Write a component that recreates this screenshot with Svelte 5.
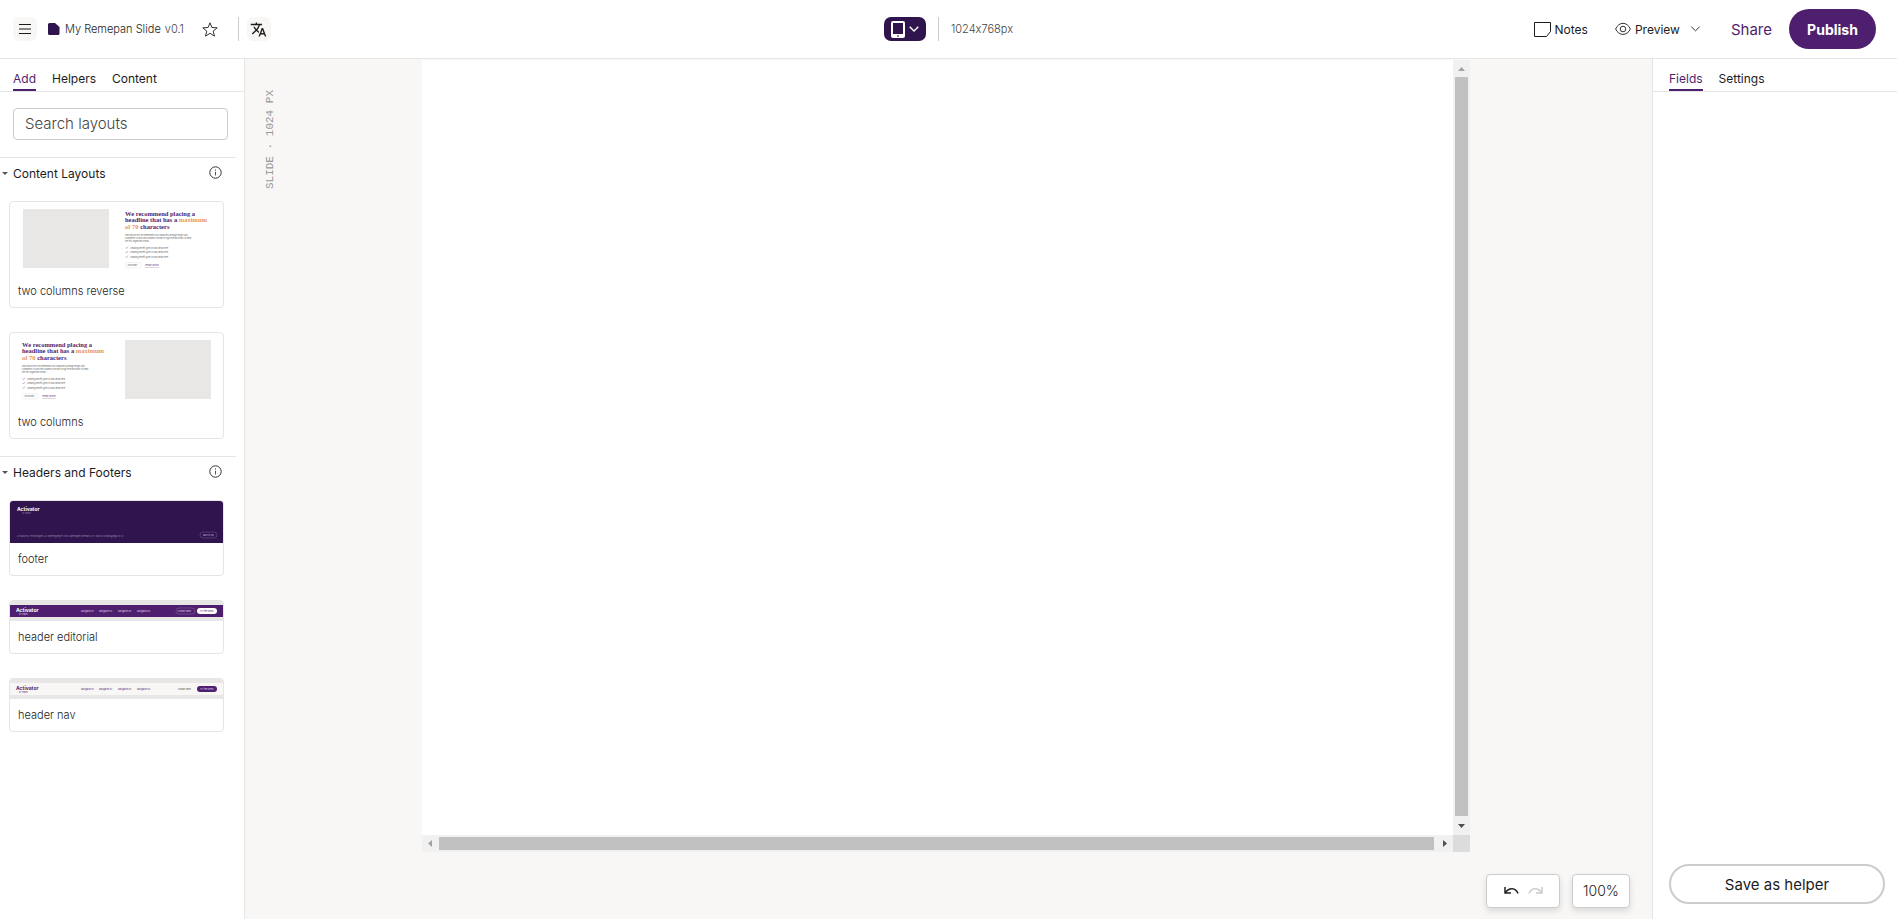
<script>
	const leftTabs = ['Add', 'Helpers', 'Content'];
	const rightTabs = ['Fields', 'Settings'];
	const groups = [
		{
			title: 'Content Layouts',
			items: [
				{ label: 'two columns reverse', kind: 'columns', textX: 230, boxX: 26 },
				{ label: 'two columns', kind: 'columns', textX: 24, boxX: 230 }
			]
		},
		{
			title: 'Headers and Footers',
			items: [
				{ label: 'footer', kind: 'footer' },
				{ label: 'header editorial', kind: 'header', dark: true },
				{ label: 'header nav', kind: 'header', dark: false }
			]
		}
	];
	const navX = [71, 89, 108, 127];

	let leftTab = 'Add';
	let rightTab = 'Fields';
	let search = '';
</script>

<div class="app">
	<header>
		<div class="bar-left">
			<button class="square" aria-label="Menu">
				<svg width="12" height="10" viewBox="0 0 12 10"><path d="M0 .5h12M0 5h12M0 9.5h12" stroke="#1c1c1c" stroke-width="1.2" /></svg>
			</button>
			<svg class="doc" width="12" height="12" viewBox="0 0 12 12"><path d="M1.500 0H7l4.500 4v6.500A1.500 1.500 0 0 1 10 12H1.500A1.500 1.500 0 0 1 0 10.500v-9A1.500 1.500 0 0 1 1.500 0z" fill="#2f144d" /></svg>
			<span class="name">My Remepan Slide</span>
			<span class="version">v0.1</span>
			<button class="plain star" aria-label="Favourite">
				<svg width="16" height="15" viewBox="0 0 16 15"><path d="M8 .8l1.900 4.700 5.300.3-4 3.300 1.300 5L8 11.300l-4.500 2.800 1.300-5-4-3.300 5.300-.3z" fill="none" stroke="#333" stroke-linejoin="round" /></svg>
			</button>
			<span class="divider"></span>
			<button class="square" aria-label="Translate">
				<svg width="17" height="17" viewBox="0 0 24 24"><path d="M12.870 15.070l-2.540-2.510.03-.03A17.520 17.520 0 0 0 14.070 6H17V4h-7V2H8v2H1v2h11.170A15.700 15.700 0 0 1 9 11.350 15.700 15.700 0 0 1 6.690 8h-2a17.600 17.600 0 0 0 2.980 4.560l-5.090 5.020L4 19l5-5 3.110 3.110zM18.500 10h-2L12 22h2l1.120-3h4.750L21 22h2zm-2.620 7l1.620-4.330L19.120 17z" fill="#1c1c1c" /></svg>
			</button>
		</div>
		<div class="bar-middle">
			<button class="device" aria-label="Device size">
				<svg width="14" height="17" viewBox="0 0 14 17"><rect width="14" height="17" rx="2" fill="#fff" /><rect x="2" y="2" width="10" height="11" fill="#2f144d" /><path d="M6 15h2" stroke="#2f144d" /></svg>
				<svg width="10" height="6" viewBox="0 0 10 6"><path d="M.7.7L5 5 9.300.7" fill="none" stroke="#fff" stroke-width="1.400" /></svg>
			</button>
			<span class="divider"></span>
			<span class="size">1024x768px</span>
		</div>
		<div class="bar-right">
			<button class="plain notes">
				<svg width="17" height="15" viewBox="0 0 17 15"><path d="M.5.5h16v9l-4 5H.5z" fill="none" stroke="#1c1c1c" stroke-linejoin="round" /></svg>
				Notes
			</button>
			<button class="plain preview">
				<svg width="16" height="14" viewBox="0 0 16 14"><path d="M.6 7C4-.6 12-.6 15.400 7 12 14.200 4 14.200.6 7z" fill="none" stroke="#333" /><circle cx="8" cy="7" r="2.800" fill="none" stroke="#333" /></svg>
				Preview
				<svg class="caret" width="9" height="6" viewBox="0 0 9 6"><path d="M.4.8l4.100 4 4.100-4" fill="none" stroke="#333" /></svg>
			</button>
			<button class="plain share">Share</button>
			<button class="publish">Publish</button>
		</div>
	</header>

	<main>
		<aside class="left">
			<nav>
				{#each leftTabs as tab}
					<button class:active={leftTab === tab} on:click={() => (leftTab = tab)}>{tab}</button>
				{/each}
			</nav>
			<div class="search">
				<input type="text" placeholder="Search layouts" aria-label="Search layouts" bind:value={search} />
			</div>
			{#each groups as group}
				<details open>
					<summary>
						<span class="arrow"></span>
						{group.title}
						<svg class="info" width="13" height="13" viewBox="0 0 13 13"><circle cx="6.500" cy="6.500" r="5.700" fill="none" stroke="#333" /><path d="M6.500 5.700v3.800M6.500 3.400v1.200" stroke="#555" /></svg>
					</summary>
					<div class="cards">
						{#each group.items as item}
							<button class="card">
								{#if item.kind === 'columns'}
									<svg viewBox="0 0 426 146">
										<rect x={item.boxX} y="14" width="172" height="118" fill="#e8e7e6" />
										<g transform="translate({item.textX} 0)">
											<g class="headline">
												<text y="27">We recommend placing a</text>
												<text y="40">headline that has a <tspan class="orange">maximum</tspan></text>
												<text y="53"><tspan class="orange">of 70</tspan> characters</text>
											</g>
											<g class="copy">
												<text y="68">Description text recommended 150 characters average length split.</text>
												<text y="74">Completely to provide a shared concept in high level and easy to keep</text>
												<text y="80">the text organised overall.</text>
											</g>
											{#each [93, 102, 111] as y}
												<path d="M1 {y - 2}l2 2 3-4" fill="none" stroke="#8a6ba8" />
												<text class="small" x="10" {y}>Amazing benefit goes in bold detail here</text>
											{/each}
											<rect x="0" y="121" width="32" height="11" rx="4" fill="#fff" stroke="#e5e5e5" />
											<text class="small" x="5" y="128">Secondary</text>
											<text class="small link" x="40" y="128">Tertiary action</text>
										</g>
									</svg>
								{:else if item.kind === 'footer'}
									<svg viewBox="0 0 213 42">
										<rect width="213" height="42" fill="#2f144d" />
										<text class="logo white" x="7" y="10">Activator</text>
										<text class="faint" x="12" y="13">by Zeplin</text>
										<text class="faint" x="7" y="36">Activator Buy Technologies LLC  Weteringweg 91 2018 Copenhagen Denmark  20 11 1000 00  contact@legal.co.uk</text>
										<rect x="190" y="31" width="17" height="6" rx="3" fill="none" stroke="#785f91" stroke-width=".5" />
										<text class="tiny pale" x="193" y="35">Back to top</text>
									</svg>
								{:else}
									<svg viewBox="0 0 213 20" class:dark={item.dark}>
										<rect width="213" height="20" fill="#e8e7e6" />
										<rect class="strip" y="4" width="213" height="12" />
										<text class="logo" x="6" y="11">Activator</text>
										<text class="tiny nav-text" x="9" y="14">by Zeplin</text>
										{#each navX as x, i}
											<text class="tiny nav-text" {x} y="11">Navigation 0{i + 1}</text>
										{/each}
										<rect class="ghost" x="166" y="7" width="19" height="6" rx="3" />
										<text class="tiny contact" x="168" y="11">Contact sales</text>
										<rect class="solid" x="187" y="7" width="20" height="6" rx="3" />
										<text class="tiny solid-text" x="190" y="11">Try free demo</text>
									</svg>
								{/if}
								<span>{item.label}</span>
							</button>
						{/each}
					</div>
				</details>
			{/each}
		</aside>

		<section class="stage">
			<div class="workspace">
				<span class="ruler">SLIDE · 1024 PX</span>
				<div class="frame">
					<div class="slide"></div>
					<div class="track vertical">
						<svg viewBox="0 0 17 17"><path d="M5 11h7L8.500 7z" fill="#a3a3a3" /></svg>
						<div class="thumb"></div>
						<svg viewBox="0 0 17 17"><path d="M5 6h7l-3.500 4z" fill="#505050" /></svg>
					</div>
					<div class="track horizontal">
						<svg viewBox="0 0 17 17"><path d="M10 5v7L6 8.500z" fill="#a3a3a3" /></svg>
						<div class="thumb"></div>
						<svg viewBox="0 0 17 17"><path d="M7 5v7l4-3.500z" fill="#505050" /></svg>
					</div>
					<div class="corner"></div>
				</div>
			</div>
			<div class="tools">
				<div class="history">
					<button class="plain" aria-label="Undo">
						<svg width="15" height="8" viewBox="0 0 15 8"><path d="M1 0v6h6M1.500 5.500C5 .2 11.500.2 14 6.500" fill="none" stroke="#222" stroke-width="1.500" /></svg>
					</button>
					<button class="plain" aria-label="Redo" disabled>
						<svg width="15" height="8" viewBox="0 0 15 8"><path d="M14 0v6H8M13.500 5.500C10 .2 3.500.2 1 6.500" fill="none" stroke="#ccc" stroke-width="1.500" /></svg>
					</button>
				</div>
				<button class="zoom">100%</button>
			</div>
		</section>

		<aside class="right">
			<nav>
				{#each rightTabs as tab}
					<button class:active={rightTab === tab} on:click={() => (rightTab = tab)}>{tab}</button>
				{/each}
			</nav>
			<button class="save">Save as helper</button>
		</aside>
	</main>
</div>

<style>
	:global(body) {
		margin: 0;
	}
	.app {
		display: flex;
		flex-direction: column;
		min-height: 100vh;
		font-family: Inter, 'DM Sans', sans-serif;
		font-size: 12px;
		font-variant-ligatures: no-contextual;
		color: #1c1c1c;
		background: #fff;
	}
	.app * {
		box-sizing: border-box;
	}
	button {
		font: inherit;
		font-variant-ligatures: no-contextual;
		color: inherit;
		padding: 0;
		border: 0;
		background: none;
		cursor: pointer;
	}
	svg {
		display: block;
		flex: none;
	}
	header {
		display: grid;
		grid-template-columns: 1fr auto 1fr;
		align-items: center;
		height: 59px;
		padding: 0 21px 0 13px;
		border-bottom: 1px solid #e5e5e5;
	}
	.bar-left,
	.bar-middle,
	.bar-right {
		display: flex;
		align-items: center;
		height: 48px;
	}
	.bar-middle {
		margin-left: 8px;
	}
	.bar-right {
		justify-content: flex-end;
	}
	.square {
		display: grid;
		place-items: center;
		width: 24px;
		height: 24px;
		border-radius: 6px;
		background: #f8f7f5;
	}
	.doc {
		margin: 0 5px 0 11px;
	}
	.name {
		font-size: 11px;
		font-weight: 300;
		color: #1c1c1c;
	}
	.version {
		margin-left: 4px;
		font-size: 11px;
		font-weight: 300;
		color: #444;
	}
	.star {
		margin: 0 20px 0 18px;
	}
	.divider {
		width: 1px;
		height: 24px;
		background: #ccc;
	}
	.bar-left .divider {
		margin-right: 8px;
	}
	.device {
		display: flex;
		align-items: center;
		justify-content: center;
		gap: 4px;
		width: 42px;
		height: 24px;
		border-radius: 7px;
		background: #2f144d;
	}
	.bar-middle .divider {
		margin: 0 12px;
	}
	.size {
		font-size: 11px;
		font-weight: 300;
		color: #444;
	}
	.notes,
	.preview {
		display: flex;
		align-items: center;
		gap: 4px;
	}
	.notes {
		margin-right: 27px;
	}
	.caret {
		margin-left: 7px;
	}
	.share {
		margin: 0 17px 0 31px;
		font-size: 15px;
		color: #4f1f6f;
	}
	.publish {
		width: 87px;
		height: 40px;
		border-radius: 20px;
		font-size: 14px;
		font-weight: 700;
		color: #fff;
		background: #4f1f6f;
	}
	main {
		display: flex;
		flex: 1;
	}
	.left {
		width: 245px;
		border-right: 1px solid #e5e5e5;
	}
	.right {
		display: flex;
		flex-direction: column;
		width: 245px;
		border-left: 1px solid #e5e5e5;
	}
	nav {
		display: flex;
		align-items: flex-end;
		gap: 16px;
		height: 33px;
		padding: 0 13px;
		border-bottom: 1px solid #e5e5e5;
	}
	.right nav {
		padding: 0 16px;
	}
	nav button {
		height: 24px;
		border-bottom: 2px solid transparent;
	}
	nav button.active {
		color: #4f1f6f;
		border-color: #4f1f6f;
	}
	.search {
		padding: 16px 16px 17px 13px;
	}
	.search input {
		display: block;
		width: 100%;
		height: 32px;
		padding: 0 11px 1px;
		font: inherit;
		font-size: 15px;
		font-weight: 300;
		border: 1px solid #ccc;
		border-radius: 4px;
	}
	.search input::placeholder {
		color: #444;
	}
	details {
		width: 236px;
		border-top: 1px solid #e5e5e5;
		padding-bottom: 17px;
	}
	summary {
		display: flex;
		align-items: center;
		height: 43px;
		padding: 0 14px 12px 2px;
		list-style: none;
		cursor: pointer;
	}
	.arrow {
		margin-right: 5px;
		border: 3px solid transparent;
		border-top-color: #555;
		border-bottom: 0;
		width: 5px;
	}
	.info {
		margin: 0 0 3px auto;
	}
	.cards {
		display: flex;
		flex-direction: column;
		gap: 24px;
		padding: 0 12px 0 9px;
	}
	.card {
		width: 100%;
		overflow: hidden;
		text-align: left;
		border: 1px solid #e5e5e5;
		border-radius: 4px;
	}
	.card svg {
		width: 100%;
	}
	.card span {
		display: block;
		padding: 0 8px;
		font-size: 11px;
		font-weight: 300;
		line-height: 32px;
		color: #1c1c1c;
	}
	.headline {
		font: bold 13px 'Liberation Serif', serif;
		fill: #4f1f6f;
	}
	.orange {
		fill: #e8955a;
	}
	.copy,
	.small {
		font-size: 4px;
		fill: #666;
	}
	.tiny {
		font-size: 2px;
		fill: #444;
	}
	.link {
		fill: #4f1f6f;
		text-decoration: underline;
	}
	.logo {
		font-size: 5px;
		font-weight: 700;
		fill: #4f1f6f;
	}
	.white,
	.dark .logo {
		fill: #fff;
	}
	.faint {
		font-size: 2px;
		fill: #9c8aad;
	}
	.pale {
		fill: #c9bed4;
	}
	.strip {
		fill: #f8f7f5;
	}
	.dark .strip {
		fill: #4f1f6f;
	}
	.nav-text {
		fill: #4f1f6f;
	}
	.dark .nav-text,
	.dark .contact {
		fill: #e0d5e8;
	}
	.ghost {
		fill: none;
	}
	.dark .ghost {
		stroke: #8c6aa5;
		stroke-width: 0.5px;
	}
	.solid {
		fill: #4f1f6f;
	}
	.solid-text {
		fill: #e0d5e8;
	}
	.dark .solid {
		fill: #fff;
	}
	.dark .solid-text {
		fill: #4f1f6f;
	}
	.stage {
		display: flex;
		flex: 1;
		flex-direction: column;
		background: #f8f7f5;
	}
	.workspace {
		display: grid;
		flex: 1;
		grid-template-columns: 177px 1fr 182px;
		padding-top: 1px;
	}
	.ruler {
		justify-self: start;
		align-self: start;
		margin: 30px 0 0 17px;
		font: 11px/16px 'Liberation Mono', monospace;
		color: #999;
		writing-mode: vertical-rl;
		transform: rotate(180deg);
	}
	.frame {
		display: grid;
		grid-template: 1fr 17px / 1fr 17px;
	}
	.slide {
		background: #fff;
	}
	.track {
		display: flex;
		background: #f1f1f1;
	}
	.vertical {
		flex-direction: column;
	}
	.track svg {
		width: 17px;
		height: 17px;
	}
	.thumb {
		flex: 1;
		background: #c1c1c1;
	}
	.vertical .thumb {
		margin: 0 2px 2px;
	}
	.horizontal .thumb {
		margin: 2px 2px 2px 0;
	}
	.corner {
		background: #dcdcdc;
	}
	.tools {
		display: flex;
		justify-content: flex-end;
		gap: 12px;
		padding: 22px 22px 11px;
	}
	.history,
	.zoom {
		display: flex;
		align-items: center;
		justify-content: center;
		height: 34px;
		border: 1px solid #ccc;
		border-radius: 4px;
		background: #fff;
		box-shadow: 0 3px 6px rgba(0, 0, 0, 0.12);
	}
	.history {
		gap: 9px;
		width: 74px;
	}
	.zoom {
		width: 58px;
		padding-bottom: 1px;
		font-size: 14px;
		font-weight: 300;
		color: #1c1c1c;
	}
	.save {
		height: 40px;
		margin: auto 12px 15px 16px;
		font-size: 15px;
		border: 2px solid #ccc;
		border-radius: 20px;
	}
</style>
